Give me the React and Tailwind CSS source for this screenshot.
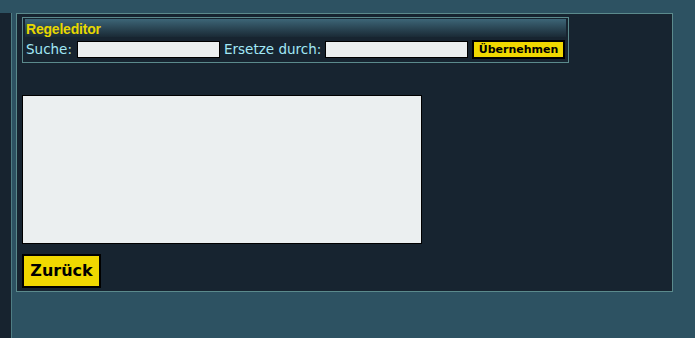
export default function App() {
  return (
    <div className="w-[695px] h-[338px] bg-[#2d5262] flex overflow-hidden" style={{ fontFamily: '"DejaVu Sans", Verdana, sans-serif' }}>
      <div className="mt-[13px] w-[12px] h-[325px] bg-[#17232f] border-r border-[#4f7d84] shrink-0" />
      <div className="ml-[4px] mt-[13px] w-[657px] h-[279px] bg-[#172430] border border-[#5b8a8c] shrink-0 pl-[5px] pt-[3px] flex flex-col items-start">
        <div className="w-[547px] h-[46px] border border-[#5b8a8c] p-[1px] pl-[2px] pr-[2px] flex flex-col">
          <div className="h-[18px] bg-gradient-to-b from-[#3d6677] to-[#1a2a36] flex items-center pl-[1px] pt-[2px]">
            <span className="text-[14px] font-bold text-[#e8d800] leading-none tracking-[-0.2px]" style={{ fontFamily: '"Liberation Sans", Arial, sans-serif' }}>Regeleditor</span>
          </div>
          <div className="flex items-center mt-[3px] h-[19px] pl-[1px]">
            <span className="w-[51px] text-[13.5px] text-[#a2e8f6] leading-none whitespace-nowrap">Suche:</span>
            <div className="w-[143px] h-[17px] bg-[#ebeff0] border border-black" />
            <span className="ml-[4px] w-[101px] text-[13.5px] text-[#a2e8f6] leading-none whitespace-nowrap">Ersetze durch:</span>
            <div className="w-[143px] h-[17px] bg-[#ebeff0] border border-black" />
            <div className="ml-[4px] w-[93px] h-[19px] bg-[#f0d800] border-2 border-black flex items-center justify-center">
              <span className="text-[11px] font-bold text-black leading-none">Übernehmen</span>
            </div>
          </div>
        </div>
        <div className="mt-[32px] w-[400px] h-[149px] bg-[#ebeff0] border border-black" />
        <div className="mt-[10px] w-[79px] h-[34px] bg-[#f0d800] border-2 border-black flex items-center justify-center">
          <span className="text-[16px] font-bold text-black leading-none">Zurück</span>
        </div>
      </div>
    </div>
  );
}
